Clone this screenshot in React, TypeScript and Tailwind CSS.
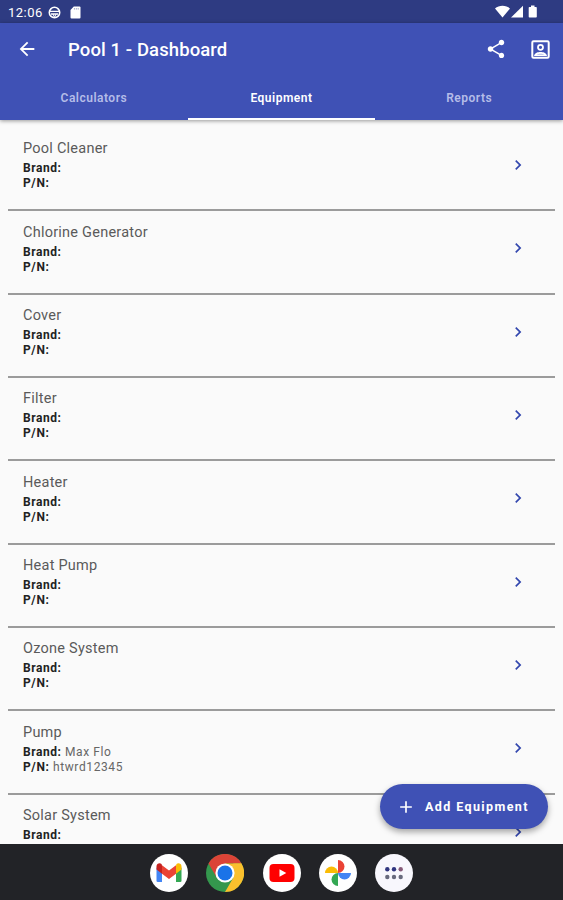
import { MdAdd, MdArrowBack, MdChevronRight, MdShare } from 'react-icons/md';

type Equipment = { name: string; brand?: string; partNumber?: string };

const equipment: Equipment[] = [
  { name: 'Pool Cleaner', partNumber: '' },
  { name: 'Chlorine Generator', partNumber: '' },
  { name: 'Cover', partNumber: '' },
  { name: 'Filter', partNumber: '' },
  { name: 'Heater', partNumber: '' },
  { name: 'Heat Pump', partNumber: '' },
  { name: 'Ozone System', partNumber: '' },
  { name: 'Pump', brand: 'Max Flo', partNumber: 'htwrd12345' },
  { name: 'Solar System' },
];

function StatusBar() {
  return (
    <div className="flex h-[23px] shrink-0 items-center bg-[#2e3b82] pt-px pr-[25px] pl-2 text-white">
      <span className="w-[40px] text-[13px] leading-none tracking-[0.5px] whitespace-nowrap">12:06</span>
      <svg className="size-[13px]" viewBox="0 0 13 13" fill="none" stroke="currentColor">
        <circle cx="6.5" cy="6.5" r="5.2" strokeWidth="1.6" />
        <path d="M1.5 5.3h10M3 8h7" strokeWidth="1.3" />
        <path d="M5 8l1.5 3.5L8 8" strokeWidth="1" />
      </svg>
      <svg className="ml-[9px] h-[13px] w-[11px]" viewBox="0 0 11 13">
        <path d="M3.8.5H9.5a1 1 0 0 1 1 1v10a1 1 0 0 1-1 1h-8a1 1 0 0 1-1-1V4z" fill="currentColor" />
        <path d="M4.4 2v1.6M6.3 2v1.6M8.2 2v1.6" stroke="#7780b0" strokeWidth=".7" />
      </svg>
      <svg className="mb-px ml-auto h-[13px] w-[43px]" viewBox="0 0 43 13" fill="currentColor">
        <path d="M0 3.6C4-.2 11-.2 15 3.6L7.5 12.5z" />
        <path d="M28 .8v11.7H16z" />
        <path d="M34.5 2H36V.5h3.5V2H41q.8 0 .8.8v9q0 .8-.8.8h-6.5q-.8 0-.8-.8v-9q0-.8.8-.8z" />
      </svg>
    </div>
  );
}

function ContactIcon() {
  return (
    <svg className="size-[19px]" viewBox="0 0 19 19" fill="none" stroke="currentColor">
      <rect x="1.3" y="1.3" width="16.4" height="16.4" rx="1.2" strokeWidth="2" />
      <circle cx="9.5" cy="7.3" r="2.5" strokeWidth="1.8" />
      <path d="M3 16c.7-3.5 4-4 6.5-4s5.8.5 6.5 4z" fill="currentColor" stroke="none" />
      <path d="M5.8 14.7c1.8-1.2 5.6-1.2 7.4 0z" fill="#b4bce8" stroke="none" />
    </svg>
  );
}

function EquipmentRow({ item }: { item: Equipment }) {
  return (
    <li className="mx-2 flex h-[83.35px] border-b-2 border-[#9b9b9b] pl-[15px] last:border-0">
      <div className="flex-1 pt-[12.2px] text-[12px] leading-[15px] tracking-[0.6px] text-[#666]">
        <h2 className="mb-[3px] text-[14.5px] leading-[18px] tracking-[0.24px] text-[#5a5a5a]">{item.name}</h2>
        <p><b className="font-bold tracking-[0.55px] text-[#222]">Brand:</b> {item.brand}</p>
        {item.partNumber !== undefined && (
          <p><b className="font-bold tracking-[0.6px] text-[#222]">P/N:</b> {item.partNumber}</p>
        )}
      </div>
      <MdChevronRight className="mt-[27px] mr-[27px] size-[20px] text-[#3347ae]" />
    </li>
  );
}

function Dock() {
  return (
    <nav className="flex h-14 shrink-0 items-center justify-center gap-[18.3px] bg-[#222327] pt-px">
      <svg className="size-[38px]" viewBox="0 0 38 38">
        <circle cx="19" cy="19" r="19" fill="#fff" />
        <path d="M6.5 13.5v13.2q0 1.3 1.3 1.3H12V16.5z" fill="#4285f4" />
        <path d="M31.5 13.5v13.2q0 1.3-1.3 1.3H26V16.5z" fill="#34a853" />
        <path d="M26 11.5v8.3l5.5-4.2V12.5c0-2.7-3-4-5-2.5z" fill="#fbbc04" />
        <path d="M6.5 15.6l5.5 4.2v-8.5L11.5 10c-2-1.5-5-.2-5 2.5z" fill="#c5221f" />
        <path d="M12 11.3l7 5.2 7-5.2v8.5L19 25l-7-5.2z" fill="#ea4335" />
      </svg>
      <svg className="size-[38px]" viewBox="0 0 38 38">
        <circle cx="19" cy="19" r="19" fill="#34974d" />
        <path d="M2.5 9.5A19 19 0 0 1 35.5 9.5H19L10.8 23.8z" fill="#db4437" />
        <path d="M35.5 9.5A19 19 0 0 1 19 38l8.3-14.2V9.5z" fill="#fbc02d" />
        <path d="M19 9.5h16.5l-8.2 14.3z" fill="#fbc02d" />
        <circle cx="19" cy="19" r="9.6" fill="#fff" />
        <circle cx="19" cy="19" r="7.5" fill="#1a73e8" />
      </svg>
      <svg className="size-[38px]" viewBox="0 0 38 38">
        <circle cx="19" cy="19" r="19" fill="#fff" />
        <rect x="6.5" y="10" width="25" height="18" rx="4" fill="#f00" />
        <path d="M16.5 15.2v7.6l6.8-3.8z" fill="#fff" />
      </svg>
      <svg className="size-[38px]" viewBox="0 0 38 38">
        <circle cx="19" cy="19" r="19" fill="#fff" />
        <path d="M19 6a6.5 6.5 0 0 1 0 13z" fill="#ea4335" />
        <path d="M32 19a6.5 6.5 0 0 1-13 0z" fill="#4285f4" />
        <path d="M19 32a6.5 6.5 0 0 1 0-13z" fill="#34a853" />
        <path d="M6 19a6.5 6.5 0 0 1 13 0z" fill="#fbbc04" />
      </svg>
      <svg className="size-[38px]" viewBox="0 0 38 38">
        <circle cx="19" cy="19" r="19" fill="#f8f7fd" />
        <g fill="#30357f">
          <circle cx="12.3" cy="15.3" r="2.2" />
          <circle cx="19" cy="15.3" r="2.2" />
        </g>
        <circle cx="25.7" cy="15.3" r="2.2" fill="#865a79" />
        <g fill="#686a7d">
          <circle cx="12.3" cy="23" r="2.2" />
          <circle cx="19" cy="23" r="2.2" />
          <circle cx="25.7" cy="23" r="2.2" />
        </g>
      </svg>
    </nav>
  );
}

export default function App() {
  return (
    <div className="flex h-[900px] w-[563px] flex-col overflow-hidden bg-[#fafafa] font-[Roboto,sans-serif]">
      <StatusBar />

      <header className="z-10 flex h-[97px] shrink-0 flex-col bg-[#3f51b5] text-white shadow-[0_1px_4px_rgba(0,0,0,0.4)]">
        <div className="flex h-[52px] items-center pr-[13px] pl-4">
          <MdArrowBack className="size-[22px]" />
          <h1 className="ml-[30px] flex-1 pt-[4px] text-[18.5px] font-medium tracking-[0.1px]">Pool 1 - Dashboard</h1>
          <MdShare className="mr-[24px] size-[22px]" />
          <ContactIcon />
        </div>
        <div className="grid flex-1 grid-cols-3 text-center text-[12px] leading-[47px] font-semibold tracking-[0.5px]">
          <span className="h-[45px] text-[#b5bde8]">Calculators</span>
          <span className="h-[45px] border-b-2 border-white">Equipment</span>
          <span className="h-[45px] text-[#b5bde8]">Reports</span>
        </div>
      </header>

      <main className="relative min-h-0 flex-1 overflow-hidden pt-2">
        <ul>
          {equipment.map((item) => <EquipmentRow key={item.name} item={item} />)}
        </ul>
        <button className="absolute right-[15px] bottom-[15px] flex h-[45px] w-[168px] items-center rounded-full bg-[#3f51b5] pl-[16px] text-[12.5px] font-bold tracking-[1.4px] whitespace-nowrap text-white shadow-[0_3px_6px_rgba(0,0,0,0.35)]">
          <MdAdd className="mr-[9px] size-[20px]" />
          <span className="pt-[2px]">Add Equipment</span>
        </button>
      </main>

      <Dock />
    </div>
  );
}
